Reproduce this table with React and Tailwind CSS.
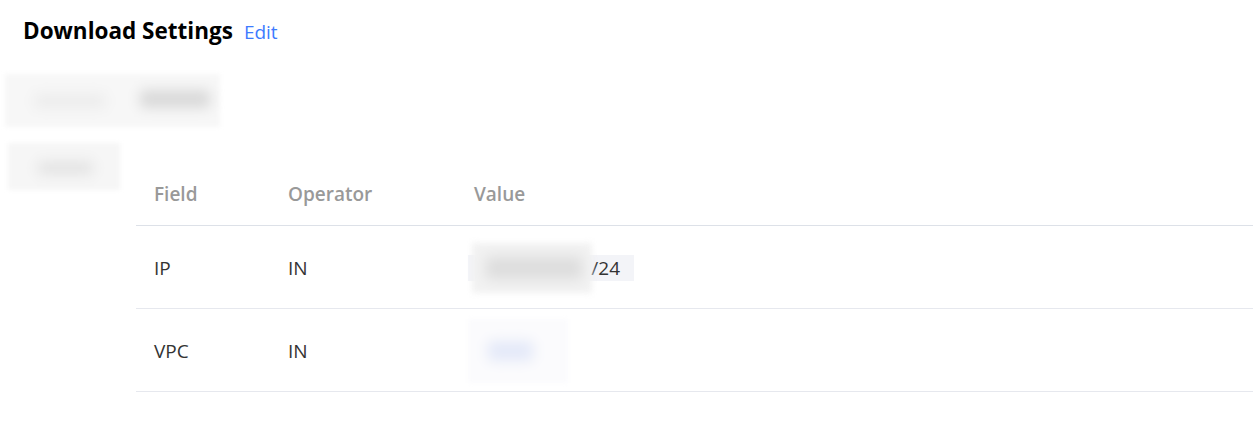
import React from 'react';

const rows = [
  { field: 'IP', op: 'IN', kind: 'ip' },
  { field: 'VPC', op: 'IN', kind: 'vpc' },
];

function Blur({ className }) {
  return <div className={`rounded-sm blur-[6px] ${className}`} />;
}

export default function App() {
  return (
    <div className="w-[1253px] h-[423px] bg-white font-['Open_Sans',sans-serif] text-[#333] overflow-hidden">
      <div className="flex items-end gap-[11px] pl-[23px] pt-[16px]">
        <h2 className="text-[22.5px] font-bold text-black leading-[30px]">Download Settings</h2>
        <a className="text-[19px] text-[#3d7bff] leading-[27px]">Edit</a>
      </div>

      <div className="relative mt-[28px] ml-[5px] h-[53px] w-[215px] bg-[#f7f7f7] blur-[2px]">
        <Blur className="absolute left-[30px] top-[20px] h-[14px] w-[70px] bg-[#ececec]" />
        <Blur className="absolute left-[135px] top-[16px] h-[18px] w-[70px] bg-[#d9d9d9]" />
      </div>

      <div className="flex mt-[16px]">
        <div className="relative ml-[8px] h-[47px] w-[112px] bg-[#f6f6f6] blur-[2px] shrink-0">
          <Blur className="absolute left-[30px] top-[18px] h-[14px] w-[55px] bg-[#e4e4e4]" />
        </div>
        <div className="ml-[16px] mt-[17px] flex-1">
          <div className="grid grid-cols-[134px_186px_1fr] h-[66px] pt-[4px] items-center border-b border-[#dde1e8] text-[19px] font-semibold text-[#999]">
            <div className="pl-[18px]">Field</div>
            <div className="pl-[18px]">Operator</div>
            <div className="pl-[18px]">Value</div>
          </div>
          {rows.map((r) => (
            <div
              key={r.field}
              className="grid grid-cols-[134px_186px_1fr] h-[83px] pt-[2px] items-center border-b border-[#e6e8ee] text-[19px] text-[#333]"
            >
              <div className="pl-[18px]">{r.field}</div>
              <div className="pl-[18px]">{r.op}</div>
              <div className="pl-[12px]">
                {r.kind === 'ip' ? (
                  <div className="relative inline-flex h-[26px] w-[166px] items-center justify-end bg-[#f3f4f8] pr-[14px]">
                    <span>/24</span>
                    <div className="absolute left-[4px] top-[-12px] h-[50px] w-[120px] bg-[#f2f2f2] blur-[3px]">
                      <div className="absolute left-[14px] top-[14px] h-[22px] w-[96px] bg-[#dcdcdc] blur-[6px]" />
                    </div>
                  </div>
                ) : (
                  <div className="relative h-[64px] w-[100px] bg-[#fbfbfd] blur-[2px]">
                    <Blur className="absolute left-[20px] top-[22px] h-[20px] w-[45px] bg-[#e4e9f8]" />
                  </div>
                )}
              </div>
            </div>
          ))}
        </div>
      </div>
    </div>
  );
}
